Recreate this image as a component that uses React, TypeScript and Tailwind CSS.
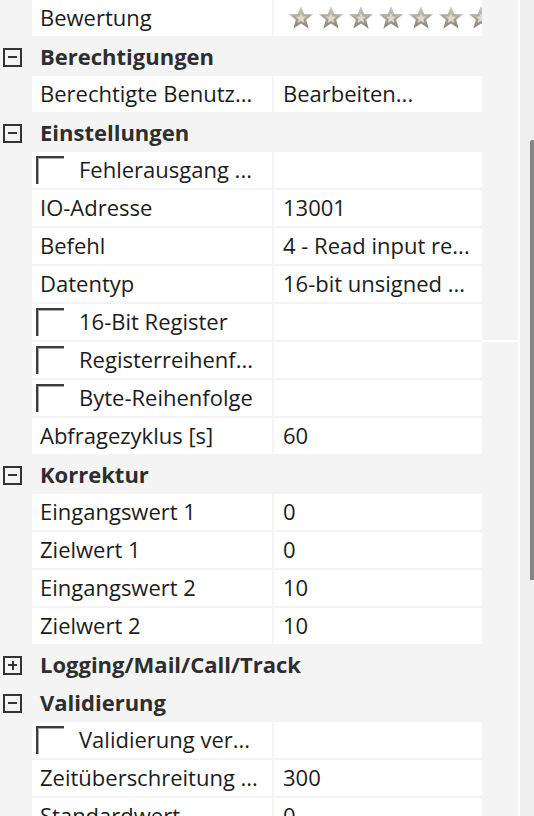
import React from 'react';

type Row =
  | { kind: 'cat'; label: string; open: boolean }
  | { kind: 'prop'; label: string; value?: string; check?: boolean; stars?: boolean };

const rows: Row[] = [
  { kind: 'prop', label: 'Bewertung', stars: true },
  { kind: 'cat', label: 'Berechtigungen', open: true },
  { kind: 'prop', label: 'Berechtigte Benutz...', value: 'Bearbeiten...' },
  { kind: 'cat', label: 'Einstellungen', open: true },
  { kind: 'prop', label: 'Fehlerausgang ...', check: true },
  { kind: 'prop', label: 'IO-Adresse', value: '13001' },
  { kind: 'prop', label: 'Befehl', value: '4 - Read input re...' },
  { kind: 'prop', label: 'Datentyp', value: '16-bit unsigned ...' },
  { kind: 'prop', label: '16-Bit Register', check: true },
  { kind: 'prop', label: 'Registerreihenf...', check: true },
  { kind: 'prop', label: 'Byte-Reihenfolge', check: true },
  { kind: 'prop', label: 'Abfragezyklus [s]', value: '60' },
  { kind: 'cat', label: 'Korrektur', open: true },
  { kind: 'prop', label: 'Eingangswert 1', value: '0' },
  { kind: 'prop', label: 'Zielwert 1', value: '0' },
  { kind: 'prop', label: 'Eingangswert 2', value: '10' },
  { kind: 'prop', label: 'Zielwert 2', value: '10' },
  { kind: 'cat', label: 'Logging/Mail/Call/Track', open: false },
  { kind: 'cat', label: 'Validierung', open: true },
  { kind: 'prop', label: 'Validierung ver...', check: true },
  { kind: 'prop', label: 'Zeitüberschreitung ...', value: '300' },
  { kind: 'prop', label: 'Standardwert', value: '0' },
];

function Star() {
  return (
    <svg width="26" height="25" viewBox="0 0 26 25" className="shrink-0">
      <defs>
        <linearGradient id="sg" x1="0" y1="0" x2="0" y2="1">
          <stop offset="0" stopColor="#d2cec2" />
          <stop offset="1" stopColor="#888173" />
        </linearGradient>
      </defs>
      <path
        d="M13 1 L16.2 9 L25 9.3 L18.2 14.8 L20.6 23.6 L13 18.6 L5.4 23.6 L7.8 14.8 L1 9.3 L9.8 9 Z"
        fill="url(#sg)"
      />
      <path
        d="M13 8 L14.4 11.6 L18.2 11.8 L15.3 14.2 L16.3 18 L13 15.8 L9.7 18 L10.7 14.2 L7.8 11.8 L11.6 11.6 Z"
        fill="#dedad0"
      />
    </svg>
  );
}

function ToggleBox({ open }: { open: boolean }) {
  return (
    <div className="relative w-[19px] h-[19px] border-2 border-[#333333]">
      <div className="absolute left-[3px] top-[6.5px] w-[9px] h-[2px] bg-[#333333]" />
      {!open && <div className="absolute left-[6.5px] top-[3px] w-[2px] h-[9px] bg-[#333333]" />}
    </div>
  );
}

function CheckBox() {
  return (
    <div className="w-[28px] h-[28px] border-t-2 border-l-2 border-[#3c3c3c]">
      <div className="w-full h-full border-t border-l border-[#a6a6a6]" />
    </div>
  );
}

export default function App() {
  return (
    <div
      className="w-[534px] h-[816px] overflow-hidden flex bg-white text-[22px] text-[#1c1c1c]"
      style={{ fontFamily: '"Segoe UI", "Open Sans", sans-serif' }}
    >
      <div className="w-[482px] shrink-0 flex flex-col bg-[#f4f4f4]">
        {rows.map((r, i) =>
          r.kind === 'cat' ? (
            <div key={i} className="h-[38px] shrink-0 flex items-center">
              <div className="w-[40px] pl-[3px]">
                <ToggleBox open={r.open} />
              </div>
              <span className="font-bold text-[#2e2e2e] leading-[34px] pb-[3px] whitespace-nowrap">
                {r.label}
              </span>
            </div>
          ) : (
            <div key={i} className="h-[38px] shrink-0 flex pb-[2px]">
              <div className="w-[32px] shrink-0" />
              <div className="w-[240px] shrink-0 bg-white flex items-center overflow-hidden">
                {r.check ? (
                  <>
                    <div className="pl-[4px] w-[47px] shrink-0">
                      <CheckBox />
                    </div>
                    <span className="leading-[34px] pb-[2px] whitespace-nowrap">{r.label}</span>
                  </>
                ) : (
                  <span className="pl-[8px] leading-[34px] pb-[2px] whitespace-nowrap">{r.label}</span>
                )}
              </div>
              <div className="w-[2px] shrink-0" />
              <div className="w-[208px] shrink-0 bg-white flex items-center overflow-hidden">
                {r.stars ? (
                  <div className="flex gap-[4px] pl-[14px] pb-[1px]">
                    {Array.from({ length: 10 }).map((_, k) => (
                      <Star key={k} />
                    ))}
                  </div>
                ) : (
                  <span className="pl-[9px] leading-[34px] pb-[2px] whitespace-nowrap">{r.value}</span>
                )}
              </div>
            </div>
          )
        )}
      </div>
      <div className="w-[36px] shrink-0 flex flex-col gap-[2px] bg-white">
        <div className="h-[340px] bg-[#f4f4f4]" />
        <div className="flex-1 bg-[#f4f4f4]" />
      </div>
      <div className="w-[2px] shrink-0 bg-white" />
      <div className="w-[14px] shrink-0 bg-[#efefef] pl-[10px]">
        <div className="mt-[140px] h-[440px] w-[4px] bg-[#858585] rounded-tl-[2px]" />
      </div>
    </div>
  );
}
